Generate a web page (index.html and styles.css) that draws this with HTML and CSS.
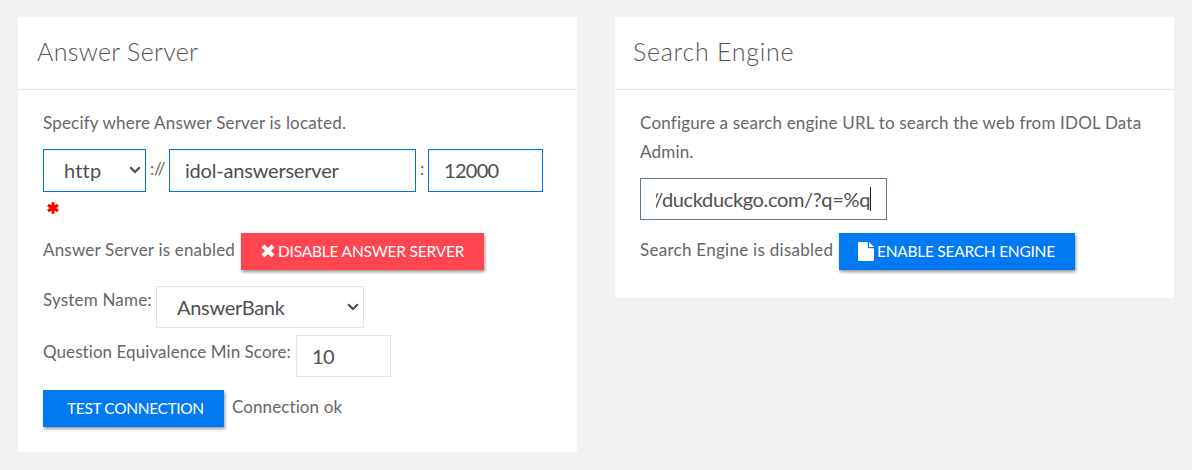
FILE: index.html
```html
<!DOCTYPE html>
<html lang="en">
<head>
<meta charset="utf-8">
<title>Answer Server settings</title>
<link rel="stylesheet" href="styles.css">
</head>
<body>
<main class="page">
  <section class="card card-answer">
    <header class="card-header"><h2 class="title title-answer">Answer Server</h2></header>
    <div class="card-body">
      <p class="text intro-answer">Specify where Answer Server is located.</p>
      <div class="row address">
        <div class="select protocol active"><span>http</span><svg class="chevron" viewBox="0 0 12 8"><path d="M1.2 1.2 6 6l4.8-4.8"/></svg></div>
        <span class="text sep">://</span>
        <input class="field host active" value="idol-answerserver">
        <span class="text colon">:</span>
        <input class="field port number active" value="12000">
      </div>
      <div class="required"><svg class="asterisk" viewBox="0 0 12 12"><path d="M6 .2v11.6M.9 3.1l10.2 5.8M.9 8.9l10.2-5.8"/></svg></div>
      <div class="row status">
        <span class="text answer-state">Answer Server is enabled</span>
        <button class="btn danger"><svg class="cross" viewBox="0 0 14 14"><path d="M2 2l10 10M12 2 2 12"/></svg><span class="disable-label">DISABLE ANSWER SERVER</span></button>
      </div>
      <div class="row system">
        <span class="text system-label">System Name:</span>
        <div class="select bank"><span>AnswerBank</span><svg class="chevron" viewBox="0 0 12 8"><path d="M1.2 1.2 6 6l4.8-4.8"/></svg></div>
      </div>
      <div class="row score">
        <span class="text score-label">Question Equivalence Min Score:</span>
        <input class="field min-score number" value="10">
      </div>
      <div class="row test">
        <button class="btn primary test-btn"><span class="test-label">TEST CONNECTION</span></button>
        <span class="text result">Connection ok</span>
      </div>
    </div>
  </section>
  <section class="card card-search">
    <header class="card-header"><h2 class="title title-search">Search Engine</h2></header>
    <div class="card-body">
      <p class="text intro-search">Configure a search engine URL to search the web from IDOL Data<br>Admin.</p>
      <div class="field url"><div class="url-view"><span class="url-text">//duckduckgo.com/?q=%q</span></div></div>
      <div class="row status search-status">
        <span class="text search-state">Search Engine is disabled</span>
        <button class="btn primary enable-btn"><svg class="file" viewBox="0 0 16 19"><path d="M0 1Q0 0 1 0h8.8v5.2q0 1 1 1H16V18q0 1-1 1H1q-1 0-1-1zM11 0l5 5h-5z"/></svg><span class="enable-label">ENABLE SEARCH ENGINE</span></button>
      </div>
    </div>
  </section>
</main>
</body>
</html>
```
FILE: styles.css
```css
* { box-sizing: border-box; }
body { margin: 0; background: #f2f2f2; color: #666; font-family: Lato, "Noto Sans", sans-serif; font-variant-ligatures: none; }
.page { display: flex; align-items: flex-start; gap: 38px; padding: 17px 18px; }
.card { width: 559px; background: #fff; }
.card-answer { height: 435px; }
.card-search { height: 281px; }
.card-header { height: 73px; border-bottom: 1px solid #e6e6e6; padding: 17px 19px 0; }
.title { margin: 0; font-size: 25px; font-weight: 300; line-height: 34px; white-space: nowrap; color: #555; }
.title-answer { letter-spacing: .33px; }
.title-search { margin-left: -1px; letter-spacing: .72px; }
.card-body { padding: 18px 25px 0; }
.text { margin: 0; font-size: 17px; line-height: 29px; letter-spacing: .19px; white-space: nowrap; }
.row { display: flex; align-items: flex-start; }
.field, .select { border: 1px solid #e5e5e5; background: #fff; color: #4f4f4f; font: 20px Lato, "Noto Sans", sans-serif; font-variant-ligatures: none; letter-spacing: -.2px; height: 42px; padding: 0 15px 1px; border-radius: 0; outline: 0; }
.select { display: flex; align-items: center; justify-content: space-between; padding: 0 4px 1px 20px; letter-spacing: -.3px; }
.number { letter-spacing: -.7px; }
.active { border-color: #0073e7; height: 43px; box-shadow: inset 0 1px 2px #0001; }
.chevron { flex: none; width: 12px; height: 8px; fill: none; stroke: #4a4a4a; stroke-width: 2.1; }
.address { margin-top: 12px; }
.protocol { width: 103px; letter-spacing: .2px; }
.sep { width: 23px; padding-left: 4px; line-height: 40px; letter-spacing: -.2px; }
.host { width: 247px; }
.colon { width: 12px; padding-left: 4px; line-height: 40px; }
.port { width: 115px; }
.required { height: 41px; padding: 10px 0 0 4px; }
.asterisk { display: block; width: 12px; height: 12px; fill: none; stroke: #f00; stroke-width: 3; }
.status .text { padding-top: 2px; }
.answer-state { width: 198px; }
.btn { display: flex; align-items: center; flex: none; height: 37px; border: 0; padding: 0 0 1px 20px; color: #fff; font: 15.5px Lato, "Noto Sans", sans-serif; white-space: nowrap; box-shadow: 1px 2px 3px #0006; }
.danger { width: 243px; background: #ff4550; }
.primary { background: #0079f2; }
.disable-label { letter-spacing: -.2px; }
.test-label { letter-spacing: -.36px; }
.enable-label { letter-spacing: -.26px; }
.cross { flex: none; width: 14px; height: 14px; margin-right: 3px; fill: none; stroke: #fff; stroke-width: 4.2; }
.system { margin-top: 16px; }
.system-label { width: 113px; margin-top: -1px; }
.bank { width: 208px; }
.score { margin-top: 7px; }
.score-label { width: 253px; padding-top: 2px; letter-spacing: .07px; }
.min-score { width: 95px; }
.test { margin-top: 13px; }
.test-btn { width: 181px; padding-left: 24px; }
.result { padding: 2px 0 0 8px; letter-spacing: .1px; }
.url { width: 247px; margin-top: 12px; display: flex; align-items: center; border-color: #5f7a92; letter-spacing: -.35px; }
.url-view { display: flex; justify-content: flex-end; width: 215px; overflow: hidden; }
.url-text { border-right: 1px solid #222; white-space: nowrap; }
.search-status { margin-top: 13px; }
.search-state { width: 199px; letter-spacing: .28px; }
.enable-btn { width: 236px; padding-left: 19px; }
.file { flex: none; width: 16px; height: 19px; margin-right: 3px; fill: #fff; }
```
